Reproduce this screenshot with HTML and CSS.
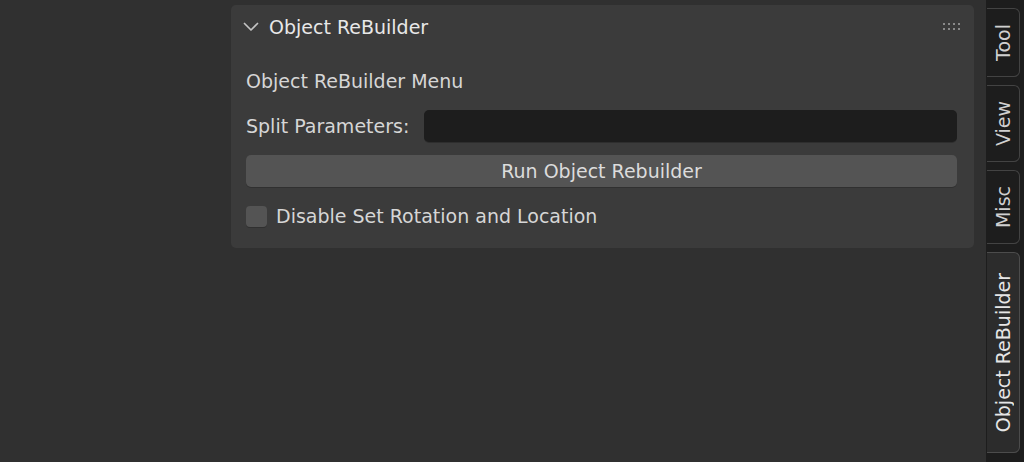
FILE: index.html
```html
<!DOCTYPE html>
<html lang="en">
<head>
  <meta charset="UTF-8" />
  <title>Object ReBuilder</title>
  <link rel="stylesheet" href="styles.css">
</head>
<body>
  <div class="viewport">
    <div class="main">
      <div class="panel">
        <div class="panel-header">
          <svg class="chevron" width="16" height="10" viewBox="0 0 16 10">
            <path d="M1.5 1.5 L8 8 L14.5 1.5" fill="none" stroke="#c4c4c4" stroke-width="1.7" stroke-linecap="round" stroke-linejoin="round"/>
          </svg>
          <span class="panel-title">Object ReBuilder</span>
          <svg class="grip" width="18" height="8" viewBox="0 0 18 8">
            <g fill="#8a8a8a">
              <rect x="0" y="0" width="2" height="2"/><rect x="5" y="0" width="2" height="2"/>
              <rect x="10" y="0" width="2" height="2"/><rect x="15" y="0" width="2" height="2"/>
              <rect x="0" y="5" width="2" height="2"/><rect x="5" y="5" width="2" height="2"/>
              <rect x="10" y="5" width="2" height="2"/><rect x="15" y="5" width="2" height="2"/>
            </g>
          </svg>
        </div>
        <div class="panel-body">
          <div class="row">Object ReBuilder Menu</div>
          <div class="row">
            <label for="split">Split Parameters:</label>
            <input type="text" id="split" class="field" />
          </div>
          <div class="row">
            <button class="run">Run Object Rebuilder</button>
          </div>
          <div class="row">
            <span class="checkbox"></span>
            <span>Disable Set Rotation and Location</span>
          </div>
        </div>
      </div>
    </div>
    <div class="tabs">
      <div class="tab"><span>Tool</span></div>
      <div class="tab"><span>View</span></div>
      <div class="tab"><span>Misc</span></div>
      <div class="tab active"><span>Object ReBuilder</span></div>
    </div>
  </div>
</body>
</html>
```

FILE: styles.css
```css
body {
  margin: 0;
  background-color: #303030;
  font-family: "DejaVu Sans", sans-serif;
  font-size: 19px;
  color: #d6d6d6;
}
.viewport {
  display: flex;
  height: 462px;
  overflow: hidden;
}
.main {
  flex: 1;
  padding: 5px 12px 0 231px;
}
.panel {
  background-color: #3b3b3b;
  border-radius: 5px;
  height: 243px;
  box-sizing: border-box;
}
.panel-header {
  display: flex;
  align-items: center;
  height: 43px;
  padding: 0 13px 0 12px;
}
.chevron {
  margin-right: 10px;
  margin-top: 1px;
}
.panel-title {
  flex: 1;
  color: #e8e8e8;
}
.panel-body {
  display: flex;
  flex-direction: column;
  gap: 13px;
  padding: 17px 17px 0 15px;
}
.row {
  display: flex;
  align-items: center;
  height: 32px;
}
label {
  flex: none;
}
.field {
  flex: 1;
  margin-left: 15px;
  height: 32px;
  box-sizing: border-box;
  border: none;
  border-radius: 5px;
  background-color: #1d1d1d;
  box-shadow: 0 1px 0 #2e2e2e;
}
.run {
  width: 100%;
  height: 32px;
  border: none;
  border-radius: 5px;
  background-color: #545454;
  box-shadow: 0 1px 0 #303030;
  color: #dcdcdc;
  font-family: "DejaVu Sans", sans-serif;
  font-size: 19px;
}
.checkbox {
  width: 21px;
  height: 21px;
  border-radius: 4px;
  background-color: #545454;
  box-shadow: 0 1px 0 #303030;
  margin-right: 9px;
}
.tabs {
  width: 38px;
  background-color: #1d1d1d;
  display: flex;
  flex-direction: column;
  gap: 8px;
  padding-top: 8px;
}
.tab {
  width: 33px;
  margin-left: 1px;
  box-sizing: border-box;
  border: 1px solid #434343;
  border-left: none;
  border-radius: 0 6px 6px 0;
  padding: 15px 0;
  display: flex;
  justify-content: center;
  color: #d0d0d0;
}
.tab span {
  writing-mode: vertical-rl;
  transform: rotate(180deg);
  line-height: 33px;
}
.tab.active {
  background-color: #2c2c2c;
  border-color: #4c4c4c;
  color: #e6e6e6;
  padding: 20px 0;
}
```
